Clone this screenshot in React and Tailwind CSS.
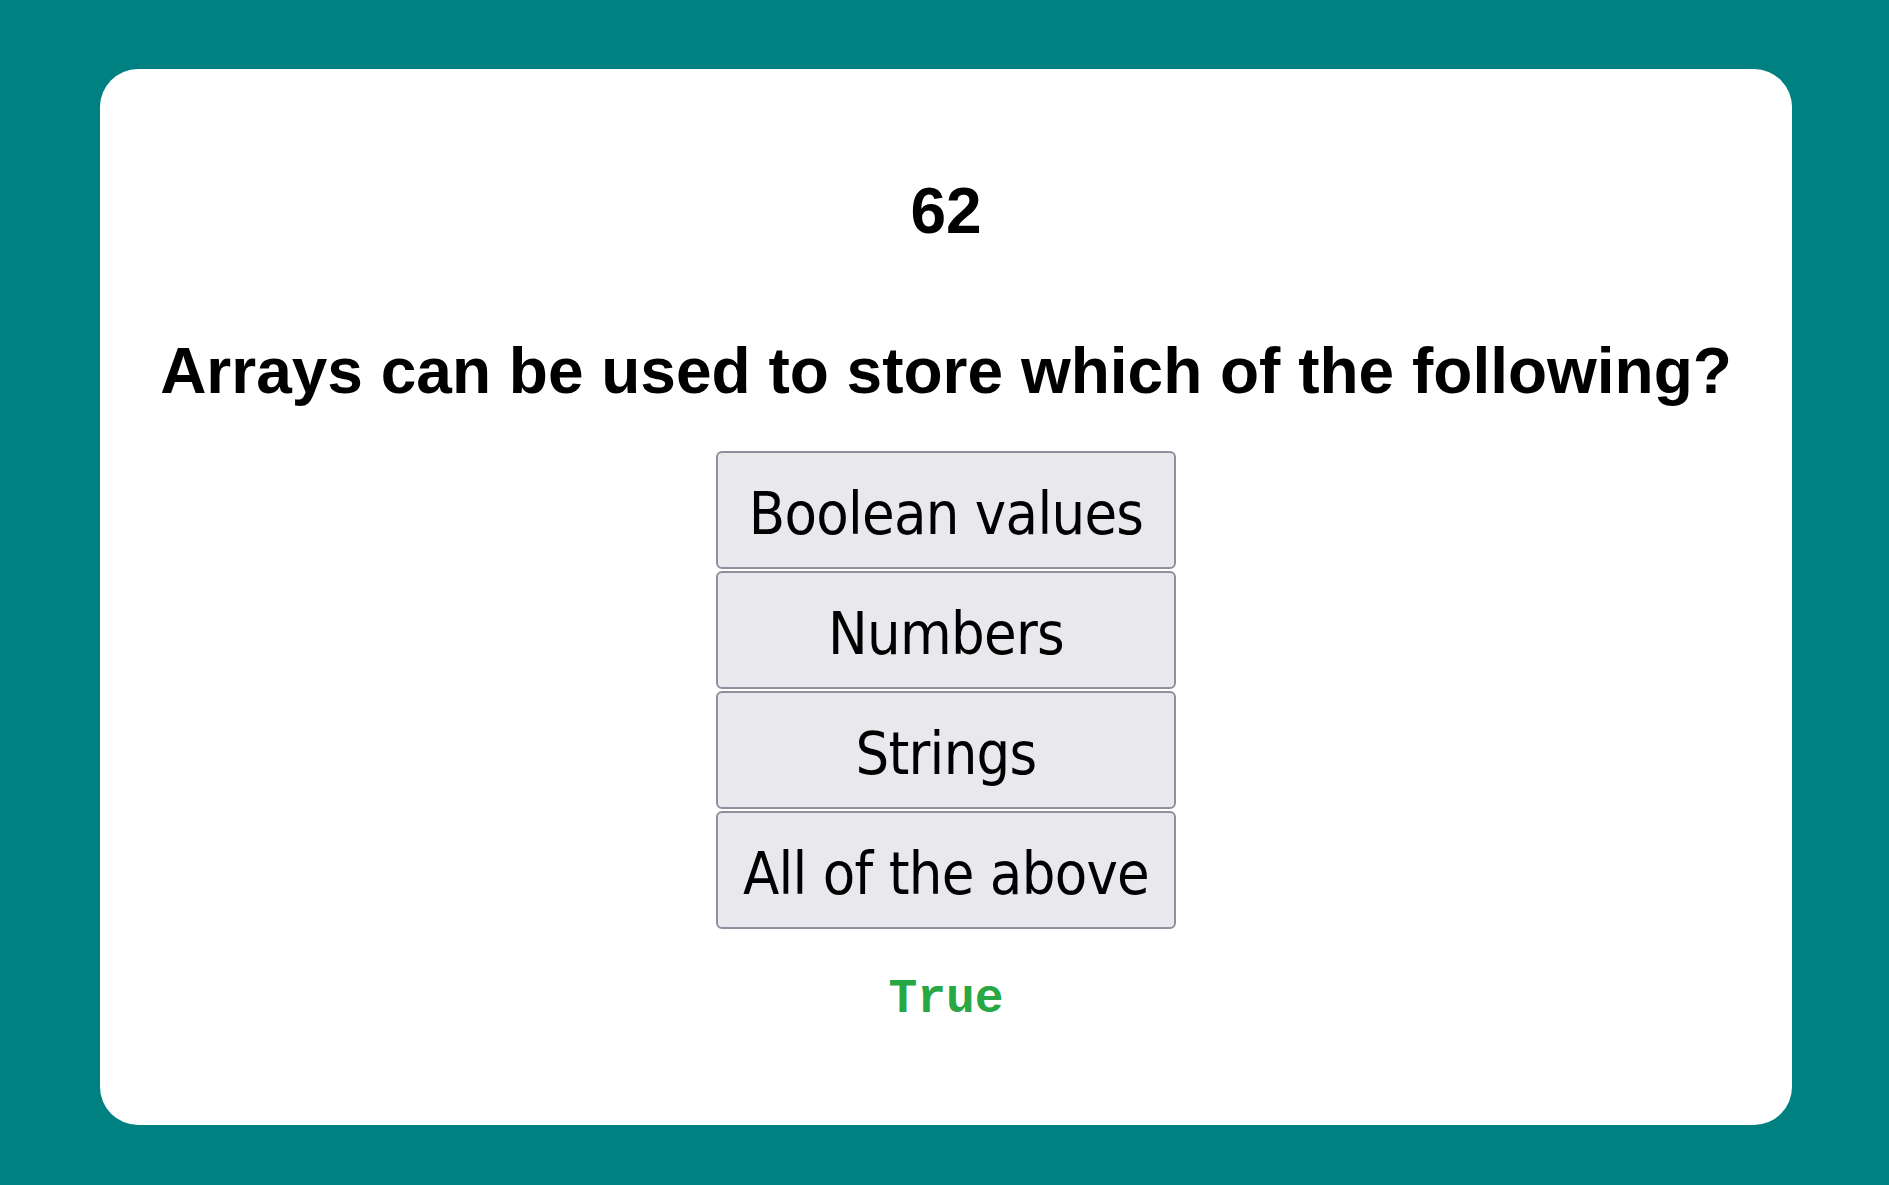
import React, { useState } from "react";

const options = ["Boolean values", "Numbers", "Strings", "All of the above"];

export default function App() {
  const [answer, setAnswer] = useState("True");

  return (
    <div className="h-[1185px] w-full overflow-hidden bg-[#008080] pt-[69px] pl-[100px]">
      {/* Card */}
      <div className="flex h-[1056px] w-[1692px] flex-col items-center rounded-[38px] bg-white pt-[105px] text-black">
        <h1 className="font-['Liberation_Sans',Arial,sans-serif] text-[64px] font-bold leading-[74px]">62</h1>
        <h2 className="mt-[86px] font-['Liberation_Sans',Arial,sans-serif] text-[64px] font-bold leading-[74px]">
          Arrays can be used to store which of the following?
        </h2>

        {/* Options */}
        <div className="mt-[43px] flex w-[460px] flex-col gap-[2px]">
          {options.map((opt) => (
            <button
              key={opt}
              onClick={() => setAnswer(opt === "All of the above" ? "True" : "False")}
              className="flex h-[118px] w-full items-center justify-center rounded-[6px] border-2 border-[#8f8f9d] bg-[#e9e9ed] pt-[6px] font-['DejaVu_Sans_Condensed','DejaVu_Sans',sans-serif] text-[59px] leading-none tracking-[-0.7px] text-black [font-stretch:condensed]"
            >
              {opt}
            </button>
          ))}
        </div>

        <p className="mt-[43px] font-['Liberation_Mono','Courier_New',monospace] text-[48px] font-bold leading-[54px] text-[#28a745]">
          {answer}
        </p>
      </div>
    </div>
  );
}
